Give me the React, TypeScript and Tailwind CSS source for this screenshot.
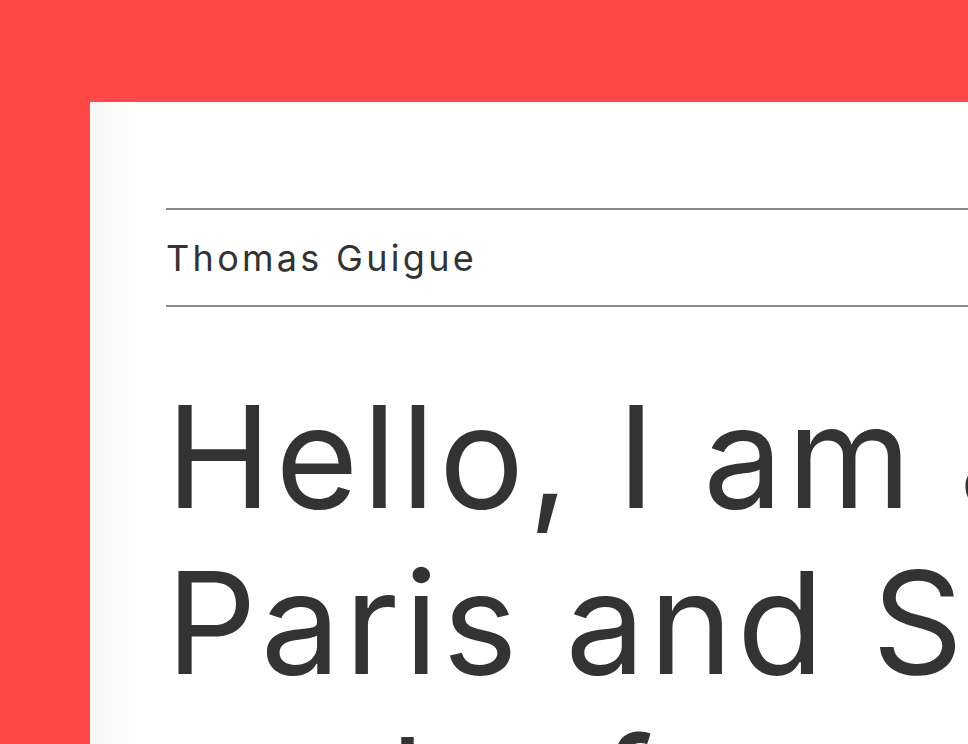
export default function App() {
  return (
    <div className="h-screen w-full overflow-hidden bg-[#ff4848] pl-[90px] pt-[102px] font-['Inter',sans-serif]">
      <main className="h-full w-full bg-gradient-to-r from-[#f7f7f7] via-white via-[6%] to-white pl-[76px] pt-[106px]">
        <header className="flex h-[99px] items-center border-y-2 border-[#8a8a8a]">
          <span className="text-[36px] leading-none tracking-[3.3px] text-[#333333]">
            Thomas Guigue
          </span>
        </header>

        <h1 className="mt-[66px] text-[142px] font-normal leading-[166px] tracking-[4px] whitespace-nowrap text-[#333333]">
          <span className="block">Hello, I am a designer</span>
          <span className="block">Paris and San Francisco</span>
          <span className="block">and a fan of Google</span>
        </h1>
      </main>
    </div>
  );
}
